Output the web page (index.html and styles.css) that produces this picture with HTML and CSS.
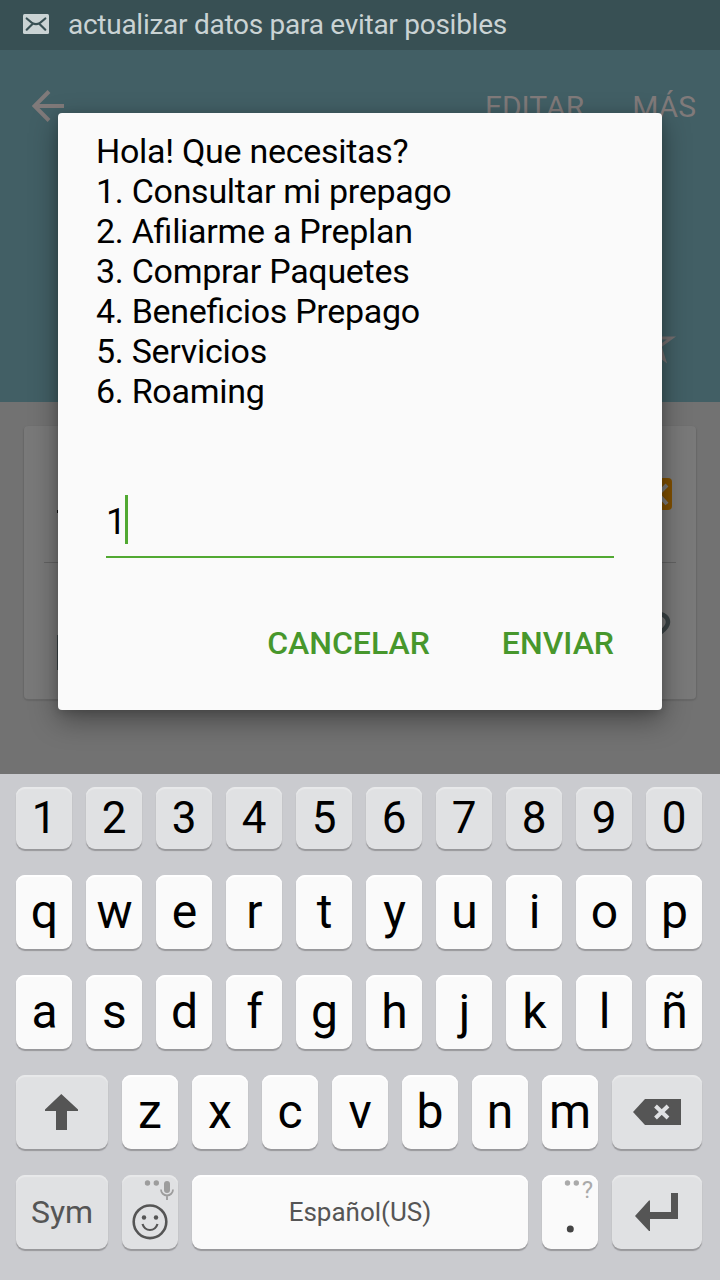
FILE: index.html
```html
<!DOCTYPE html>
<html lang="es">
<head>
<meta charset="utf-8">
<title>Prepago</title>
<link rel="stylesheet" href="styles.css">
</head>
<body>
<div class="screen">
  <div class="status">
    <svg class="mail" width="26" height="20" viewBox="0 0 26 20"><rect width="26" height="20" rx="1.5" fill="#cad3d4"/><path d="M3.700 4.500 9.500 9.300Q13 10.800 16.500 9.300L22.300 4.500M3.700 15.700 9.500 10M22.300 15.700 16.500 10" fill="none" stroke="#385054" stroke-width="2.200" stroke-linecap="round"/></svg>
    <span class="ticker">actualizar datos para evitar posibles</span>
  </div>
  <header class="header">
    <nav class="bar">
      <svg class="back" width="32" height="32" viewBox="0 0 32 32"><path d="M17 1.500 2.500 16 17 30.500M2.500 16H32" fill="none" stroke="#807a7a" stroke-width="4"/></svg>
      <span class="action">EDITAR</span>
      <span class="action">MÁS</span>
    </nav>
    <svg class="star" width="48" height="48" viewBox="0 0 48 48"><path d="M24 4.700 28.300 18H42.400L31 26.300 35.300 39.600 24 31.400 12.700 39.600 17 26.300 5.600 18H19.700Z" fill="none" stroke="#746f70" stroke-width="3"/></svg>
  </header>
  <main class="content">
    <section class="card">
      <div class="card-row card-row-top">
        <span class="tick"></span>
        <svg width="32" height="32" viewBox="0 0 32 32"><rect width="32" height="32" rx="4" fill="#805000"/><path d="M27 7 18 16 27 26" fill="none" stroke="#7b7b7b" stroke-width="4"/></svg>
      </div>
      <div class="card-row card-row-bottom">
        <svg width="8" height="70" viewBox="0 0 8 70"><path d="M6 3Q-4 9 6 15Z" fill="#55595a"/><path d="M0 35H5V70H0Z" fill="#3b4446"/></svg>
        <svg width="24" height="30" viewBox="0 0 24 30"><path d="M3 10A9 8 0 0 1 21 10Q21 15 13 21" fill="none" stroke="#3b4446" stroke-width="4.500"/></svg>
      </div>
    </section>
  </main>

  <div class="dialog">
    <div class="message">Hola! Que necesitas?<br>1. Consultar mi prepago<br>2. Afiliarme a Preplan<br>3. Comprar Paquetes<br>4. Beneficios Prepago<br>5. Servicios<br>6. Roaming</div>
    <div class="field"><span class="value">1</span><i class="caret"></i></div>
    <div class="buttons"><span class="cancel">CANCELAR</span><span class="send">ENVIAR</span></div>
  </div>

  <div class="keyboard">
    <div class="row digits">
      <div class="key">1</div><div class="key">2</div><div class="key">3</div><div class="key">4</div><div class="key">5</div><div class="key">6</div><div class="key">7</div><div class="key">8</div><div class="key">9</div><div class="key">0</div>
    </div>
    <div class="row letters">
      <div class="key">q</div><div class="key">w</div><div class="key">e</div><div class="key">r</div><div class="key">t</div><div class="key">y</div><div class="key">u</div><div class="key">i</div><div class="key">o</div><div class="key">p</div>
    </div>
    <div class="row letters">
      <div class="key">a</div><div class="key">s</div><div class="key">d</div><div class="key">f</div><div class="key">g</div><div class="key">h</div><div class="key">j</div><div class="key">k</div><div class="key">l</div><div class="key">ñ</div>
    </div>
    <div class="row">
      <div class="key dark wide"><svg width="92" height="74" viewBox="0 0 92 74"><path d="M45.300 19 62 34.500V36H51V55H40V36H29V34.500Z" fill="#555"/></svg></div>
      <div class="key">z</div><div class="key">x</div><div class="key">c</div><div class="key">v</div><div class="key">b</div><div class="key">n</div><div class="key">m</div>
      <div class="key dark end"><svg width="90" height="74" viewBox="0 0 90 74"><path d="M21 37 33 24H69V50H33Z" fill="#555"/><path d="M43.500 31 56 43M56 31 43.500 43" stroke="#e0e1e3" stroke-width="4"/></svg></div>
    </div>
    <div class="row">
      <div class="key dark wide sym">Sym</div>
      <div class="key dark"><svg width="56" height="74" viewBox="0 0 56 74"><g fill="#9d9d9d"><circle cx="25.500" cy="8" r="2.700"/><circle cx="34.300" cy="8" r="2.700"/><rect x="42" y="6" width="6" height="12" rx="3"/></g><path d="M39 14.500A6 6 0 0 0 51 14.500M45 20V25" fill="none" stroke="#9d9d9d" stroke-width="1.800"/><circle cx="28" cy="46.800" r="16.300" fill="none" stroke="#555" stroke-width="2.600"/><circle cx="22" cy="42.500" r="2.200" fill="#555"/><circle cx="34" cy="42.500" r="2.200" fill="#555"/><path d="M20.500 49Q22.500 55 28 55T35.500 49" fill="none" stroke="#555" stroke-width="2.200"/></svg></div>
      <div class="key space">Español(US)</div>
      <div class="key period"><svg width="56" height="74" viewBox="0 0 56 74"><g fill="#aaa"><circle cx="25.500" cy="8" r="2.700"/><circle cx="34.300" cy="8" r="2.700"/></g><circle cx="28.300" cy="54" r="3.500" fill="#444"/></svg><span class="hint">?</span></div>
      <div class="key dark end"><svg width="90" height="74" viewBox="0 0 90 74"><path d="M23 41 37 25.500H38V37H59V18H66V44H38V56H37Z" fill="#555"/></svg></div>
    </div>
  </div>
</div>
</body>
</html>
```
FILE: styles.css
```css
* { box-sizing: border-box; }
body { margin: 0; font-family: Roboto, sans-serif; }
svg { display: block; flex: none; }
.screen { position: relative; display: flex; flex-direction: column; width: 720px; height: 1280px; overflow: hidden; background: #727272; }
.status { height: 50px; display: flex; align-items: center; gap: 19px; padding: 0 23px 2px; background: #385054; color: #cad3d4; font-size: 28px; letter-spacing: -.27px; white-space: nowrap; }
.header { height: 352px; background: #425f65; }
.bar { height: 112px; display: flex; align-items: center; gap: 48px; padding: 0 24px 0 32px; color: #807a7a; font-size: 30px; }
.back { margin-right: auto; }
.star { margin: 158px 0 0 629px; }
.content { height: 372px; padding: 24px; background: #727272; }
.card { height: 273px; border-radius: 4px; background: #797979; box-shadow: 0 1px 1px 1px #686868; padding: 0 20px; }
.card-row { display: flex; justify-content: space-between; align-items: center; height: 137px; }
.card-row-top { border-bottom: 1px solid #636363; padding: 0 4px 0 13px; }
.tick { width: 8px; height: 3px; margin-top: 34px; background: #111; }
.card-row-bottom { padding: 0 5px 10px 13px; }
.card-row-bottom svg:first-child { margin-top: 16px; }
.dialog { position: absolute; left: 58px; top: 113px; width: 604px; height: 597px; border-radius: 4px; background: #fafafa; box-shadow: 0 10px 28px rgba(0,0,0,.38), 0 2px 10px rgba(0,0,0,.14); padding: 18px 48px 0 38px; color: #000; }
.message { height: 364px; font-size: 34px; line-height: 40px; letter-spacing: -.28px; font-feature-settings: "liga" 1; white-space: nowrap; }
.field { display: flex; align-items: center; height: 63px; margin-left: 10px; border-bottom: 2px solid #51a932; font-size: 36px; padding-bottom: 13px; }
.value { padding-top: 5px; margin-right: -1px; }
.caret { width: 3px; height: 49px; background: #51a932; }
.buttons { display: flex; justify-content: flex-end; gap: 72px; margin-top: 65px; font-size: 32px; line-height: 40px; font-weight: 500; color: #47972c; }
.keyboard { height: 506px; background: #cacbcf; padding: 13px 18px 0 16px; display: flex; flex-direction: column; gap: 26px; }
.row { display: flex; gap: 14px; height: 74px; }
.digits { height: 62px; }
.key { position: relative; width: 56px; border-radius: 9px; background: #fafafa; box-shadow: inset 0 2px 1px #fff, 0 2px 1px #98989b; display: flex; align-items: center; justify-content: center; font-size: 48px; color: #000; line-height: 1; }
.letters .key { padding-left: 1px; }
.dark, .digits .key { background: #e0e1e3; box-shadow: inset 0 2px 1px #e8e9ea, 0 2px 1px #98989b; }
.digits .key { font-size: 44px; }
.wide { width: 92px; }
.end { width: 90px; }
.sym { font-size: 32px; color: #555; }
.space { width: 336px; font-size: 26px; color: #555; }
.hint { position: absolute; right: 5px; top: 3px; font-size: 24px; color: #aaa; }
```
